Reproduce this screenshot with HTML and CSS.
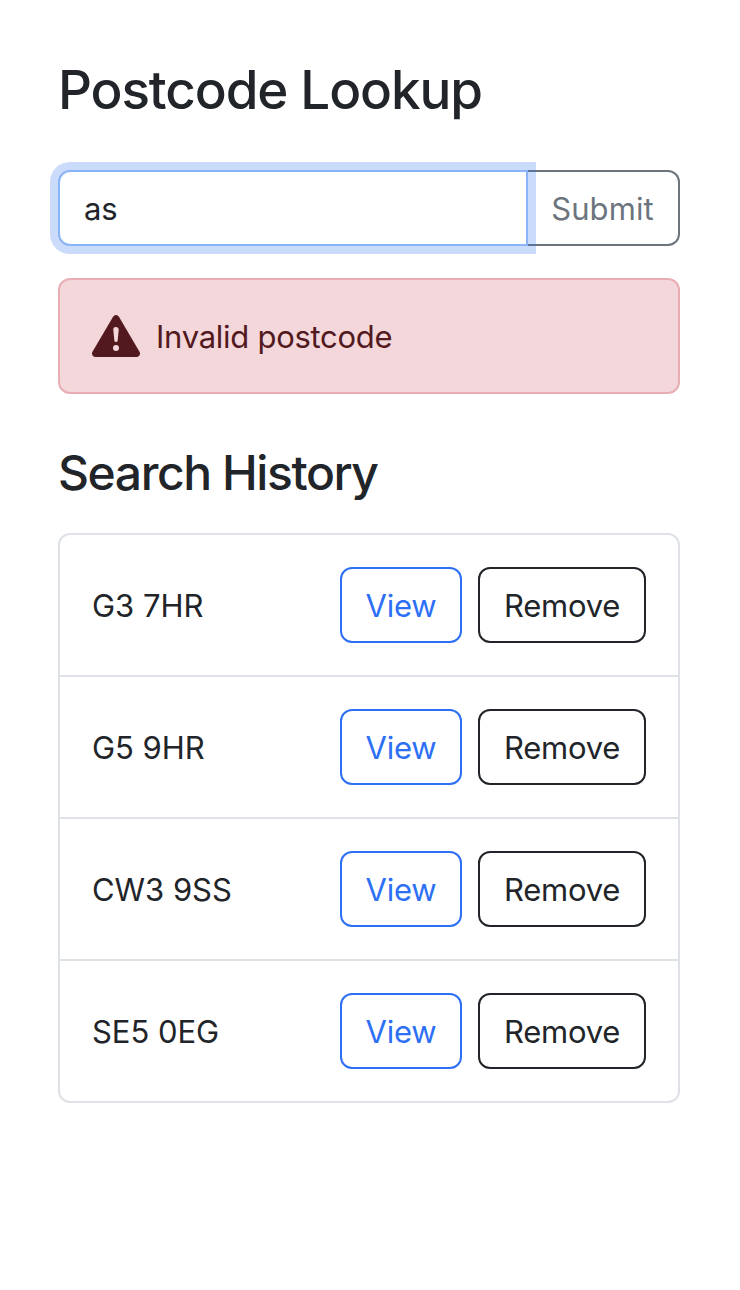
FILE: index.html
```html
<!DOCTYPE html>
<html lang="en">
<head>
<meta charset="utf-8">
<title>Postcode Lookup</title>
<link rel="stylesheet" href="styles.css">
</head>
<body>
<main class="page">
  <h1 class="title">Postcode Lookup</h1>
  <form class="search">
    <div class="field">as</div>
    <button type="button" class="submit">Submit</button>
  </form>
  <div class="alert">
    <svg class="alert-icon" viewBox="0 0 16 16" fill="currentColor"><path d="M8.982 1.566a1.13 1.13 0 0 0-1.96 0L.165 13.233c-.457.778.091 1.767.98 1.767h13.713c.889 0 1.438-.99.98-1.767L8.982 1.566zM8 5c.535 0 .954.462.9.995l-.35 3.507a.552.552 0 0 1-1.1 0L7.1 5.995A.905.905 0 0 1 8 5zm.002 6a1 1 0 1 1 0 2 1 1 0 0 1 0-2z"/></svg>
    <span class="message">Invalid postcode</span>
  </div>
  <h2 class="subtitle">Search History</h2>
  <ul class="history">
    <li class="row"><span class="code">G3 7HR</span><button class="btn view">View</button><button class="btn remove">Remove</button></li>
    <li class="row"><span class="code">G5 9HR</span><button class="btn view">View</button><button class="btn remove">Remove</button></li>
    <li class="row"><span class="code">CW3 9SS</span><button class="btn view">View</button><button class="btn remove">Remove</button></li>
    <li class="row"><span class="code">SE5 0EG</span><button class="btn view">View</button><button class="btn remove">Remove</button></li>
  </ul>
</main>
</body>
</html>
```
FILE: styles.css
```css
* { box-sizing: border-box; }
body {
  margin: 0;
  background: #fff;
  color: #212529;
  font: 400 31px/48px Inter, "Liberation Sans", sans-serif;
}
.page { width: 740px; min-height: 1290px; padding: 58px 60px 0 58px; }
.title { margin: 0 0 48px; font-size: 53px; line-height: 64px; font-weight: 500; letter-spacing: -1.12px; }
.search { display: flex; height: 76px; margin: 0 0 32px; }
.field {
  position: relative;
  z-index: 1;
  width: 470px;
  padding: 13px 24px 9px;
  border: 2px solid #8ab4f8;
  border-radius: 12px 0 0 12px;
  background: #fff;
  box-shadow: 0 0 0 8px rgba(45, 110, 245, 0.25);
  letter-spacing: -0.2px;
}
.submit {
  flex: 1;
  margin-left: -2px;
  padding: 1px 1px 0 0;
  border: 2px solid #6c757d;
  border-radius: 0 12px 12px 0;
  background: #fff;
  color: #6c757d;
  font: inherit;
  letter-spacing: 0.1px;
}
.alert {
  display: flex;
  align-items: center;
  gap: 16px;
  height: 116px;
  padding: 0 32px;
  border: 2px solid #e9aeb4;
  border-radius: 12px;
  background: #f3d7da;
  color: #52191e;
}
.alert-icon { width: 48px; height: 48px; }
.message { padding-top: 1px; letter-spacing: -0.27px; }
.subtitle { margin: 49px 0 31px; font-size: 48px; line-height: 59px; font-weight: 500; letter-spacing: -1.42px; }
.history { margin: 0; padding: 0; list-style: none; border: 2px solid #dee2e6; border-radius: 12px; }
.row { display: flex; align-items: center; height: 142px; padding: 0 32px; border-bottom: 2px solid #dee2e6; }
.row:last-child { height: 140px; border-bottom: 0; }
.code { flex: 1; padding-top: 1px; letter-spacing: -0.04px; }
.btn { height: 76px; padding: 1px 0 0; border: 2px solid; border-radius: 12px; background: #fff; font: inherit; letter-spacing: -0.25px; }
.view { width: 122px; margin-right: 16px; color: #2d70f5; }
.remove { width: 168px; color: #212529; }
```
